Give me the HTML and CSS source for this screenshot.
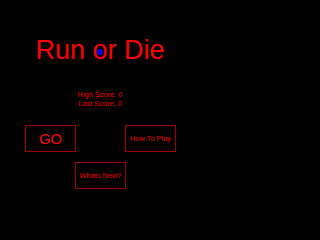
FILE: index.html
```html
<!DOCTYPE html>
<html>
<head>
<meta charset="utf-8">
<link rel="stylesheet" href="styles.css">
</head>
<body>
<div class="page">
  <h1 class="title">Run <span class="ball">o</span>r Die</h1>
  <div class="scores">
    <div class="score">High Score: 0</div>
    <div class="score">Last Score: 0</div>
  </div>
  <div class="menu">
    <div class="btn btn-go">GO</div>
    <div class="spacer"></div>
    <div class="btn btn-small">How To Play</div>
    <div class="spacer"></div>
    <div class="btn btn-small">Whats New?</div>
  </div>
</div>
</body>
</html>
```
FILE: styles.css
```css
html, body {
  margin: 0;
  padding: 0;
  background: #000;
}
body {
  width: 200px;
  height: 200px;
  overflow: hidden;
  font-family: "Liberation Sans", Arial, sans-serif;
  color: #f00;
}
.page {
  display: flex;
  flex-direction: column;
  align-items: center;
}
.title {
  margin: 37px 0 0 0;
  font-size: 27px;
  line-height: 27px;
  font-weight: normal;
  color: #f00;
  white-space: nowrap;
}
.ball {
  position: relative;
}
.ball::after {
  content: "";
  position: absolute;
  left: 50%;
  top: 58%;
  width: 6px;
  height: 6px;
  margin: -3px 0 0 -3px;
  border-radius: 50%;
  background: #0000ff;
}
.scores {
  margin-top: 27px;
  display: flex;
  flex-direction: column;
  align-items: center;
}
.score {
  font-size: 7.4px;
  line-height: 8.5px;
  color: #e00;
  white-space: nowrap;
}
.menu {
  margin-top: 17px;
  display: grid;
  grid-template-columns: repeat(3, 50px);
  grid-auto-rows: 27px;
  row-gap: 10px;
}
.btn {
  box-sizing: border-box;
  width: 51px;
  height: 27px;
  border: 1px solid #a00000;
  display: flex;
  align-items: center;
  justify-content: center;
  white-space: nowrap;
}
.btn-go {
  font-size: 14.5px;
  color: #f00;
}
.btn-small {
  font-size: 7.4px;
  color: #e00;
}
```
